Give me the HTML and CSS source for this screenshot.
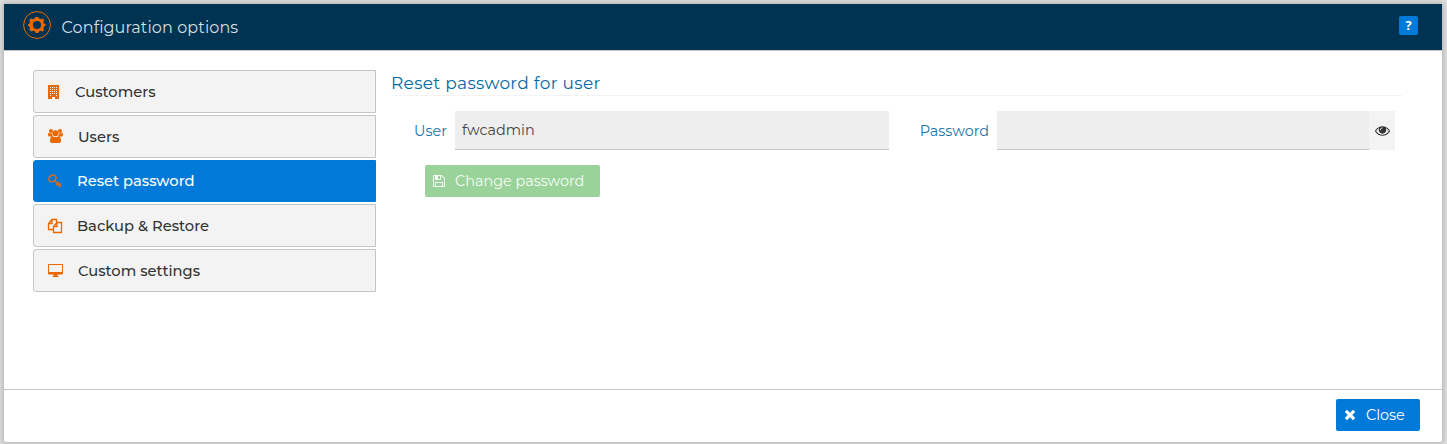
FILE: index.html
```html
<!DOCTYPE html>
<html lang="en">
<head>
<meta charset="utf-8">
<title>Configuration options</title>
<link rel="stylesheet" href="styles.css">
</head>
<body>
<div class="dialog">
  <header class="header">
    <svg class="logo" viewBox="0 0 28 28"><circle cx="14" cy="14" r="13.4" fill="none" stroke="#eb6800" stroke-width="1"/><path fill="#eb6800" fill-rule="evenodd" d="M12.600 6h2.800l.6 1.600 1.600.6 2-.7 1.500 1.500-.7 2 .6 1.600 1.600.6v1.600l-1.600.6-.6 1.600.7 2-1.500 1.500-2-.7-1.600.6-.6 1.600h-2.800l-.6-1.600-1.600-.6-2 .7L6.300 19l.7-2-.6-1.600-1.400-.6v-1.600l1.400-.6.6-1.600-.7-2 1.500-1.500 2 .7 1.600-.6zM14 9.900a4.100 4.100 0 1 0 0 8.200 4.100 4.100 0 0 0 0-8.200z"/></svg>
    <h1 class="title">Configuration options</h1>
    <button class="help">?</button>
  </header>
  <main class="body">
    <nav class="menu">
      <a class="item"><svg class="i-building" viewBox="0 0 11 14"><path fill-rule="evenodd" d="M0 0h11v14H7v-2H4v2H0zM2 2v1h1V2zm2 0v1h1V2zm2 0v1h1V2zm2 0v1h1V2zM2 4v1h1V4zm2 0v1h1V4zm2 0v1h1V4zm2 0v1h1V4zM2 6v1h1V6zm2 0v1h1V6zm2 0v1h1V6zm2 0v1h1V6zM2 8v1h1V8zm2 0v1h1V8zm2 0v1h1V8zm2 0v1h1V8zM2 10v1h1v-1zm6 0v1h1v-1z"/></svg><span>Customers</span></a>
      <a class="item low"><svg class="i-users" viewBox="0 0 15 14"><circle cx="3" cy="2" r="2"/><circle cx="12" cy="2" r="2"/><circle cx="7.5" cy="4.200" r="3"/><path d="M1 3.800Q3 5 4 4.200 4 6 5 7.500H1.400Q0 7.500 0 6 0 3.900 1 3.800zM14 3.800Q12 5 11 4.200 11 6 10 7.500h3.600Q15 7.500 15 6q0-2.100-1-2.200zM4.400 7.200Q7.500 9 10.600 7.200 13 7.700 13 12q0 2-2 2H4q-2 0-2-2 0-4.300 2.400-4.800z"/></svg><span>Users</span></a>
      <a class="item active low"><svg class="i-key" viewBox="0 0 14 14"><g fill="none" stroke="#d9691e" stroke-width="1.600"><ellipse cx="4.400" cy="4.400" rx="3.900" ry="3.100" transform="rotate(-35 4.400 4.400)"/><path d="M6.300 6.300l6.500 6.200M8.300 11.300l1.900-2.200M10.800 13l1.100-1.200M9.800 9.600l1.300-1.200M11.400 11.200l1.900-1.900"/></g></svg><span>Reset password</span></a>
      <a class="item"><svg class="i-copy" viewBox="0 0 14 14"><path fill="none" stroke="#eb6800" stroke-width="1.300" d="M5 10.500H.5v-6l3.500-4h4.500v3M4 .5v4H.5M5.500 7.500l3.500-4h4.500v10h-8zM9 3.500v4H5.500"/></svg><span>Backup &amp; Restore</span></a>
      <a class="item low"><svg class="i-desktop" viewBox="0 0 15 13"><path fill-rule="evenodd" d="M1 0h13q1 0 1 1v8.500q0 1-1 1H9.500V12h1v1h-6v-1h1v-1.500H1q-1 0-1-1V1q0-1 1-1zm0 1v7h13V1z"/></svg><span>Custom settings</span></a>
    </nav>
    <section class="content">
      <h2 class="heading"><span>Reset password for user</span></h2>
      <form class="fields">
        <label class="label">User</label>
        <div class="input">fwcadmin</div>
        <label class="label">Password</label>
        <div class="input"></div>
        <span class="reveal"><svg viewBox="0 0 1792 1792"><path d="M1664 960q-152-236-381-353 61 104 61 225 0 185-131.500 316.500t-316.500 131.500-316.500-131.500-131.500-316.500q0-121 61-225-229 117-381 353 133 205 333.500 326.500t434.500 121.500 434.500-121.500 333.500-326.500zm-720-384q0-20-14-34t-34-14q-125 0-214.500 89.500t-89.500 214.500q0 20 14 34t34 14 34-14 14-34q0-86 61-147t147-61q20 0 34-14t14-34zm848 384q0 34-20 69-140 230-376.500 368.500t-499.500 138.500-499.500-139-376.500-368q-20-35-20-69t20-69q140-229 376.500-368t499.500-139 499.500 139 376.500 368q20 35 20 69z"/></svg></span>
      </form>
      <button class="button change"><svg viewBox="128 128 1536 1536"><path d="M512 1536h768v-384h-768v384zm896 0h128v-896q0-14-10-38.500t-20-34.500l-281-281q-10-10-34-20t-39-10v416q0 40-28 68t-68 28h-576q-40 0-68-28t-28-68v-416h-128v1280h128v-416q0-40 28-68t68-28h832q40 0 68 28t28 68v416zm-384-928v-320q0-13-9.500-22.500t-22.500-9.500h-192q-13 0-22.500 9.500t-9.500 22.500v320q0 13 9.500 22.500t22.500 9.500h192q13 0 22.500-9.500t9.500-22.500zm640 32v928q0 40-28 68t-68 28h-1344q-40 0-68-28t-28-68v-1344q0-40 28-68t68-28h928q40 0 88 20t76 48l280 280q28 28 48 76t20 88z"/></svg><span>Change password</span></button>
    </section>
  </main>
  <footer class="footer">
    <button class="button close"><svg viewBox="302 366 1188 1188"><path d="M1490 1322q0 40-28 68l-136 136q-28 28-68 28t-68-28l-294-294-294 294q-28 28-68 28t-68-28l-136-136q-28-28-28-68t28-68l294-294-294-294q-28-28-28-68t28-68l136-136q28-28 68-28t68 28l294 294 294-294q28-28 68-28t68 28l136 136q28 28 28 68t-28 68l-294 294 294 294q28 28 28 68z"/></svg><span>Close</span></button>
  </footer>
</div>
</body>
</html>
```
FILE: styles.css
```css
* { box-sizing: border-box; }
body {
  margin: 0;
  height: 444px;
  padding: 3px 4px 1px 3px;
  overflow: hidden;
  background: #dedede;
  font: 14.4px/20px Montserrat, Inter, sans-serif;
  color: #333;
}
svg { display: block; flex: none; fill: currentColor; overflow: visible; }
h1, h2 { margin: 0; font-weight: 400; }
span, h1, label { white-space: nowrap; }
button { border: 0; padding: 0; font: inherit; color: #fff; }
.dialog {
  height: 440px;
  display: flex;
  flex-direction: column;
  background: #fff;
  border: 1px solid #c5c5c5;
  border-radius: 3px;
  box-shadow: 0 0 5px #aaa;
}
.header {
  height: 47px;
  flex: none;
  display: flex;
  align-items: flex-start;
  padding: 7px 24px 0 19px;
  background: #003351;
  border-bottom: 1px solid #c5c5c5;
}
.logo { width: 28px; height: 28px; }
.title { margin: 7px auto 0 10.5px; font-size: 16px; line-height: 20px; color: #d5dfe5; letter-spacing: .1px; }
.help { width: 19px; height: 19px; margin-top: 5px; border-radius: 2px; background: #007ad9; font: 700 13px/19px "Open Sans", sans-serif; }
.body { flex: 1; display: flex; padding: 19px 40px 0 29px; }
.menu { width: 343px; display: flex; flex-direction: column; gap: 1.75px; }
.item {
  height: 43px;
  flex: none;
  display: flex;
  align-items: center;
  padding-left: 14px;
  background: #f3f3f3;
  border: 1px solid #c5c5c5;
  border-radius: 3px 0 0 3px;
  font-size: 14.7px;
  font-weight: 500;
}
.item svg { color: #eb6800; }
.low span { padding-top: 1.4px; }
.active { height: 42.6px; margin-bottom: .4px; background: #007ad9; border-color: #007ad9; color: #fff; }
.i-building { width: 11px; height: 14px; margin-right: 16px; }
.i-users { width: 15px; height: 14px; margin-right: 15px; }
.i-key { width: 14px; height: 14px; margin-right: 15px; }
.i-copy { width: 14px; height: 14px; margin-right: 15px; }
.i-desktop { width: 15px; height: 13px; margin-right: 15px; }
.content { flex: 1; margin-left: 15px; }
.heading { height: 26px; border-bottom: 1px solid #f3f3f3; font-size: 17px; line-height: 26px; color: #046aa4; letter-spacing: .3px; }
.fields { display: grid; grid-template-columns: 64px 434px 108px 372px 26px; grid-template-rows: 39px; height: 39px; margin-top: 15px; }
.label { color: #1a75aa; line-height: 40px; text-align: right; padding-right: 8px; }
.input { background: #eee; border-bottom: 1px solid #c5c5c5; line-height: 38px; padding-left: 7px; color: #444; font-size: 14.4px; }
.reveal { display: flex; align-items: center; justify-content: center; background: #f3f3f3; }
.reveal svg { width: 15px; height: 15px; }
.button { height: 32px; display: flex; align-items: center; border-radius: 2px; text-align: left; }
.change { width: 175px; margin: 15px 0 0 34px; padding-left: 8px; background: #99d399; color: #f5fbf5; }
.change svg { width: 12px; height: 12px; margin-right: 10px; }
.footer { height: 53px; flex: none; display: flex; justify-content: flex-end; padding: 9px 22px 0 0; border-top: 1px solid #c5c5c5; }
.close { width: 84px; padding-left: 9px; background: #007ad9; }
.close svg { width: 10px; height: 10px; margin-right: 11px; }
```
